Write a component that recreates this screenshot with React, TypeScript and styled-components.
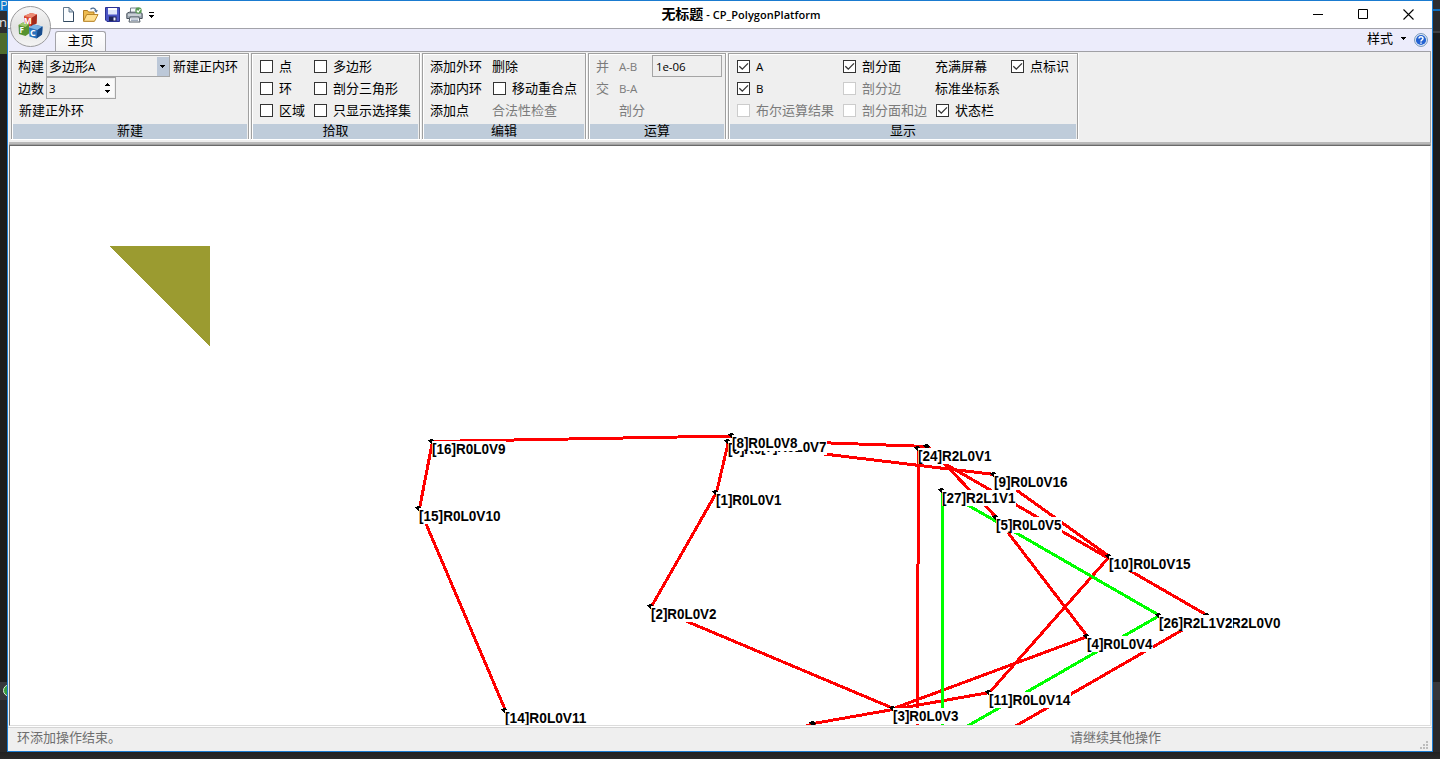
import React from "react";
import styled, { createGlobalStyle, css } from "styled-components";

const GlobalStyle = createGlobalStyle`
  html, body { margin: 0; padding: 0; overflow: hidden; background: #252526; }
  * { box-sizing: border-box; }
  body {
    font-family: "Open Sans", "Noto Sans CJK SC", sans-serif;
    font-size: 13px;
    color: #000;
  }
`;

const Desktop = styled.div`
  display: grid;
  grid-template-columns: 7px 1426px 7px;
  grid-template-rows: 752px 7px;
  width: 1440px;
  height: 759px;
  overflow: hidden;
`;

const EdgeStrip = styled.div`
  display: flex;
  flex-direction: column;
  overflow: hidden;
`;

const EdgeBlock = styled.div<{ $h: number; $bg: string; $align?: string }>`
  flex: none;
  height: ${(p) => p.$h}px;
  background: ${(p) => p.$bg};
  color: #e8e8e8;
  font-size: 13px;
  line-height: ${(p) => p.$h}px;
  display: flex;
  align-items: center;
  justify-content: ${(p) => p.$align ?? "flex-start"};
`;

const Backdrop = styled.div`
  grid-column: 1 / -1;
  background: linear-gradient(#202021, #29292a);
`;

const Window = styled.main`
  position: relative;
  display: flex;
  flex-direction: column;
  border: 1px solid #1a7bd0;
  background: #efefef;
`;

const TitleBar = styled.header`
  display: grid;
  grid-template-columns: 480px 1fr 480px;
  height: 28px;
  flex: none;
  background: #fff;
  border-bottom: 1px solid #a3a3aa;
`;

const QuickAccess = styled.div`
  display: flex;
  align-items: center;
  gap: 6px;
  padding-left: 52px;
`;

const Title = styled.h1`
  margin: 0;
  display: flex;
  justify-content: center;
  align-items: center;
  white-space: pre;
  font-size: 14px;
  font-weight: 700;
  line-height: 20px;
  padding: 0 0 1px 42px;
`;

const TitleLatin = styled.span`
  font-size: 11px;
  font-weight: 600;
  letter-spacing: 0.04px;
  padding-top: 1px;
`;

const WindowButtons = styled.div`
  display: flex;
  justify-content: flex-end;
  align-items: center;
  gap: 34px;
  padding: 0 18px 1px 0;
`;

const OrbButton = styled.button`
  position: absolute;
  left: 2px;
  top: 5px;
  width: 41px;
  height: 41px;
  padding: 0 0 2px;
  border: 1px solid #9a9a9c;
  border-radius: 50%;
  background: linear-gradient(#f6f6f6, #e2e2e2 52%, #f4f4f4);
  display: flex;
  align-items: center;
  justify-content: center;
`;

const TabRow = styled.nav`
  display: flex;
  align-items: flex-end;
  justify-content: space-between;
  height: 22px;
  flex: none;
  padding: 0 4px 0 47px;
  background: #ececfb;
`;

const Tab = styled.div`
  width: 51px;
  height: 20px;
  border: 1px solid #a3a3a8;
  border-bottom: 0;
  border-radius: 3px 3px 0 0;
  background: linear-gradient(#fff, #f3f3f5);
  text-align: center;
  line-height: 17px;
`;

const StyleMenu = styled.div`
  display: flex;
  align-items: center;
  align-self: flex-start;
  height: 18px;
  line-height: 18px;
  gap: 8px;

  svg { margin-bottom: -1px; }
  svg:last-child { margin-bottom: -3px; }
`;

const RibbonFrame = styled.section`
  flex: none;
  height: 93px;
  margin: 0 1px;
  border-top: 1px solid #a0a0a5;
  border-right: 1px solid #a0a0a5;
  border-bottom: 2px solid #b9b9b9;
  padding: 1px 0 0 2px;
  display: flex;
  gap: 1px;
`;

const Group = styled.section<{ $w: number }>`
  width: ${(p) => p.$w}px;
  height: 87px;
  border-right: 1px solid #fff;
  border-bottom: 1px solid #fff;
`;

const GroupInner = styled.div`
  height: 86px;
  border: 1px solid #a0a0a0;
  border-bottom: 0;
  box-shadow: inset 1px 1px 0 #fff;
  display: flex;
  flex-direction: column;
  justify-content: space-between;
  padding: 1px 1px 0 1px;
`;

const GroupBody = styled.div`
  display: flex;
  height: 68px;
  flex: none;
`;

const GroupLabel = styled.div`
  height: 15px;
  background: #bfccda;
  text-align: center;
  line-height: 13px;
`;

const Column = styled.div<{ $w: number; $pad?: number }>`
  flex: none;
  width: ${(p) => p.$w}px;
  padding-left: ${(p) => p.$pad ?? 0}px;
`;

const Row = styled.div<{ $muted?: boolean; $indent?: number }>`
  display: flex;
  align-items: center;
  height: 22px;
  padding-left: ${(p) => p.$indent ?? 0}px;
  white-space: nowrap;
  line-height: 20px;
  color: ${(p) => (p.$muted ? "#7b7b7b" : "#000")};
`;

const Latin = styled.span`
  font-size: 11.5px;
  letter-spacing: -0.1px;
  padding-top: 1px;
`;

const Box = styled.span<{ $muted?: boolean }>`
  flex: none;
  width: 13px;
  height: 13px;
  margin-right: 6px;
  border: 1px solid ${(p) => (p.$muted ? "#cccccc" : "#333")};
  background: #fff;
  display: flex;
`;

const fieldFrame = css`
  display: flex;
  align-items: center;
  justify-content: space-between;
  border: 1px solid #a5a5a5;
  background: #efefef;
  height: 22px;
  padding-left: 2px;
`;

const ComboBox = styled.div`
  ${fieldFrame}
  width: 124px;
  margin: 0 3px 0 2px;
`;

const ComboArrow = styled.span`
  width: 12px;
  height: 19px;
  padding-right: 2px;
  background: #bcc8d8;
  display: flex;
  align-items: center;
  justify-content: center;
`;

const SpinBox = styled.div`
  ${fieldFrame}
  width: 70px;
  margin-left: 2px;
  padding-right: 1px;
`;

const SpinArrows = styled.span`
  width: 14px;
  height: 18px;
  background: #fafafa;
  display: flex;
  align-items: center;
  justify-content: center;
`;

const TextField = styled.div`
  ${fieldFrame}
  width: 70px;
  padding-left: 3px;
`;

const CanvasFrame = styled.section`
  flex: none;
  height: 583px;
  margin: 0 1px;
  border-top: 1px solid #a0a0a0;
  border-bottom: 1px solid #fff;
  background: #fff;
`;

const CanvasWell = styled.div`
  height: 581px;
  border: 1px solid #696969;
  border-right-color: #e0e0e0;
  border-bottom-color: #dcdcdc;

  svg { display: block; }
`;

const StatusBar = styled.footer`
  flex: 1;
  border-top: 1px solid #d4d4d4;
  display: grid;
  grid-template-columns: 1053px 1fr 12px;
  padding-left: 9px;
  color: #6e6e6e;
  line-height: 19px;
`;

const Grip = styled.span`
  display: flex;
  align-items: flex-end;
  padding-bottom: 2px;
`;

function Check({ label, on, muted, latin }: { label: string; on?: boolean; muted?: boolean; latin?: boolean }) {
  return (
    <Row $muted={muted}>
      <Box $muted={muted}>
        {on && (
          <svg width="11" height="11" viewBox="0 0 11 11">
            <path d="M1.3 5.2 4.3 8.2 10 2.4" fill="none" stroke="#333" strokeWidth="1.3" />
          </svg>
        )}
      </Box>
      {latin ? <Latin>{label}</Latin> : label}
    </Row>
  );
}

function RibbonGroup({ label, width, children }: { label: string; width: number; children: React.ReactNode }) {
  return (
    <Group $w={width}>
      <GroupInner>
        <GroupBody>{children}</GroupBody>
        <GroupLabel>{label}</GroupLabel>
      </GroupInner>
    </Group>
  );
}

const DownArrow = () => (
  <svg width="5" height="3" viewBox="0 0 5 3" shapeRendering="crispEdges">
    <path d="M0 0H5V1H4V2H3V3H2V2H1V1H0Z" fill="#000" />
  </svg>
);

const OrbIcon = () => (
  <svg width="27" height="27" viewBox="0 0 27 27">
    <path d="M7 4 14 1l6 1.500-.5 9L13 14.500 7 12.500Z" fill="#d9432f" />
    <path d="M7 4 14 1l6 1.500L14.500 6Z" fill="#ec8a72" />
    <path d="M14.500 6 20 2.500l-.5 9L14 14.500Z" fill="#a32a1c" />
    <path d="M1.500 13 6 10.500l6 1.500v9.500L8.500 24l-6.500-2Z" fill="#56912f" />
    <path d="M1.500 13 6 10.500l6 1.500-3.500 3Z" fill="#9cc76a" />
    <path d="M12 15.500 17 12.500l8.500 2-.5 8L19.500 26.500l-7-2Z" fill="#2a72bd" />
    <path d="M12 15.500 17 12.500l8.500 2-5 3.500Z" fill="#7fb4e6" />
    <path d="M20.500 18 25.500 14.500l-.5 8-5.500 4Z" fill="#174b8c" />
    <g fill="#fff" fontFamily="Open Sans, sans-serif" fontWeight="700">
      <text x="6.800" y="12" fontSize="8.500">M</text>
      <text x="2.600" y="20.500" fontSize="8">F</text>
      <text x="13" y="24" fontSize="9">C</text>
    </g>
  </svg>
);

const NewIcon = () => (
  <svg width="16" height="16" viewBox="0 0 16 16">
    <path d="M3.500.500H9L13.500 5V14.500H3.500Z" fill="#fbfdff" stroke="#63788c" />
    <path d="M13.500 5V14.500H3.500" fill="none" stroke="#31485f" />
    <path d="M9 .5V5h4.500Z" fill="#c6d7e6" stroke="#4c6378" strokeWidth=".8" />
  </svg>
);

const OpenIcon = () => (
  <svg width="17" height="16" viewBox="0 0 17 16">
    <path d="M1.500 14V3.500h4l1 1.500H12v9Z" fill="#eebb4e" stroke="#ad7b22" />
    <path d="M1.500 14.300 4.700 7.500H16L12.500 14.300Z" fill="#ffdf90" stroke="#b98528" />
    <path d="M8.500 2.200C10.500.3 13 .8 14 3.500" fill="none" stroke="#496a91" strokeWidth="1.200" />
    <path d="M12 3.300h4L14.200 5.800Z" fill="#496a91" />
  </svg>
);

const SaveIcon = () => (
  <svg width="15" height="15" viewBox="0 0 15 15">
    <path d="M.5.500H14.500V14.500H2L.5 13Z" fill="#4a55c5" stroke="#2a3192" />
    <path d="M3 1h9v6.500H3Z" fill="#dfe6fa" />
    <path d="M3 1h9v2H3Z" fill="#fff" />
    <path d="M4 9.500h7.500V14H4Z" fill="#1c2358" />
    <path d="M8.500 10.500h2V13.500h-2Z" fill="#eef" />
  </svg>
);

const PrintIcon = () => (
  <svg width="17" height="16" viewBox="0 0 17 16">
    <path d="M4.500 6V1h7v5" fill="#f7f9fc" stroke="#76808b" />
    <path d="M.8 6.500 3 5.200h11l2.200 1.300v5H.8Z" fill="#a4adb7" stroke="#4c555f" />
    <path d="M2 8h13" stroke="#eef1f4" />
    <path d="M4 10h9l1 5H3Z" fill="#f7f9fc" stroke="#505a64" />
    <path d="M5 12h7M5 13.500h7" stroke="#7889a0" strokeWidth=".7" />
    <circle cx="12.500" cy="3.500" r="3.200" fill="#5a9a55" />
    <path d="m10.800 3.500 1.300 1.500L14.400 2" fill="none" stroke="#fff" strokeWidth="1.200" />
  </svg>
);

const HelpIcon = () => (
  <svg width="14" height="14" viewBox="0 0 14 14">
    <circle cx="7" cy="7" r="6.400" fill="#edf4fc" stroke="#6d8fb5" />
    <circle cx="7" cy="7" r="5.100" fill="#2462d2" />
    <path d="M5 5.600c0-2.700 4-2.500 4-.2C9 6.900 7 6.800 7 8.400M7 9.400v1.400" fill="none" stroke="#fff" strokeWidth="1.500" />
  </svg>
);

type Point = [number, number];

const redLines: [Point, Point][] = [
  [[432, 441], [732, 435.5]],
  [[432, 441], [419, 508]],
  [[419, 508], [505, 710]],
  [[728, 441], [716, 492]],
  [[716, 492], [651, 606]],
  [[651, 606], [893, 708]],
  [[893, 708], [1087, 636]],
  [[1087, 636], [996, 517]],
  [[996, 517], [927, 446]],
  [[927, 446], [761, 440]],
  [[728, 442], [994, 474]],
  [[994, 474], [1109, 556]],
  [[1109, 556], [989, 692]],
  [[989, 692], [813, 723]],
  [[813, 723], [780, 735]],
  [[918, 448], [916.6, 782]],
  [[918, 448], [1207, 615]],
  [[1207, 615], [917, 782]],
];

const greenLines: [Point, Point][] = [
  [[942, 490], [942, 740]],
  [[942, 490], [1159, 615]],
  [[1159, 615], [942, 740]],
];

const vertices: { at: Point; label?: string }[] = [
  { at: [927, 446] },
  { at: [813, 723] },
  { at: [1207, 615], label: "[25]R2L0V0" },
  { at: [1159, 615], label: "[26]R2L1V2" },
  { at: [728, 441], label: "[6]R0L0V6" },
  { at: [761, 439], label: "[7]R0L0V7" },
  { at: [732, 435], label: "[8]R0L0V8" },
  { at: [716, 492], label: "[1]R0L0V1" },
  { at: [651, 606], label: "[2]R0L0V2" },
  { at: [893, 708], label: "[3]R0L0V3" },
  { at: [1087, 636], label: "[4]R0L0V4" },
  { at: [996, 517], label: "[5]R0L0V5" },
  { at: [994, 474], label: "[9]R0L0V16" },
  { at: [1109, 556], label: "[10]R0L0V15" },
  { at: [989, 692], label: "[11]R0L0V14" },
  { at: [505, 710], label: "[14]R0L0V11" },
  { at: [419, 508], label: "[15]R0L0V10" },
  { at: [432, 441], label: "[16]R0L0V9" },
  { at: [918, 448], label: "[24]R2L0V1" },
  { at: [942, 490], label: "[27]R2L1V1" },
];

const labelWidth = (label: string) => 66 + 8 * (label.length - 9);

function PolygonCanvas() {
  return (
    <svg width="1420" height="579" viewBox="10 146 1420 579">
      <g shapeRendering="crispEdges">
        <path d="M109.500 246H210V346.500Z" fill="#9b9b30" />
        <g strokeWidth="3" stroke="#ff0000" transform="translate(0.5 0.5)">
          {redLines.map(([a, b], i) => (
            <line key={i} x1={a[0]} y1={a[1]} x2={b[0]} y2={b[1]} />
          ))}
        </g>
        <g strokeWidth="3" stroke="#00ff00" transform="translate(0.5 0.5)">
          {greenLines.map(([a, b], i) => (
            <line key={i} x1={a[0]} y1={a[1]} x2={b[0]} y2={b[1]} />
          ))}
        </g>
        {vertices.map(({ at: [x, y] }, i) => (
          <path key={i} d={`M${x - 1} ${y - 2}h2v1h1v1h1v1h-1v1h-1v1h-2v-1h-1v-1h-1v-1h-1v-1h2v-1h1Z`} fill="#000" />
        ))}
      </g>
      {vertices.map(({ at: [x, y], label }, i) =>
        label ? (
          <g key={i}>
            <rect x={x} y={y} width={labelWidth(label)} height="16" fill="#fff" />
            <text
              x={x}
              y={y + 13}
              fontFamily="Liberation Sans, sans-serif"
              fontWeight="700"
              fontSize="14"
              textLength={labelWidth(label) - 0.5}
              lengthAdjust="spacingAndGlyphs"
            >
              {label}
            </text>
          </g>
        ) : null,
      )}
    </svg>
  );
}

export default function App() {
  return (
    <>
      <GlobalStyle />
      <Desktop>
        <EdgeStrip>
          <EdgeBlock $h={11} $bg="#0e7ad0">P</EdgeBlock>
          <EdgeBlock $h={22} $bg="#2d2d30" $align="flex-end">n</EdgeBlock>
          <EdgeBlock $h={21} $bg="#4d6b2b" />
          <EdgeBlock $h={628} $bg="#1c1c1d" />
          <EdgeBlock $h={18} $bg="#37373b">
            <svg width="7" height="14" viewBox="0 0 7 14">
              <circle cx="9" cy="6.500" r="5.500" fill="#379a3c" stroke="#d8ead8" />
            </svg>
          </EdgeBlock>
          <EdgeBlock $h={52} $bg="#28282a" />
        </EdgeStrip>

        <Window>
          <TitleBar>
            <QuickAccess>
              <NewIcon />
              <OpenIcon />
              <SaveIcon />
              <PrintIcon />
              <svg width="6" height="6" viewBox="0 0 6 6" shapeRendering="crispEdges">
                <path d="M0 0H5V1H0ZM0 3H5V4H4V5H3V6H2V5H1V4H0Z" />
              </svg>
            </QuickAccess>
            <Title>
              无标题<TitleLatin> - CP_PolygonPlatform</TitleLatin>
            </Title>
            <WindowButtons>
              <svg width="11" height="11" viewBox="0 0 11 11">
                <path d="M0 5.500H10" stroke="#000" />
              </svg>
              <svg width="11" height="11" viewBox="0 0 11 11">
                <path d="M.5.500H9.500V9.500H.5Z" fill="none" stroke="#000" />
              </svg>
              <svg width="11" height="11" viewBox="0 0 11 11">
                <path d="M.5.500 10.500 10.500M10.500.500.500 10.500" stroke="#000" strokeWidth="1.100" />
              </svg>
            </WindowButtons>
          </TitleBar>

          <TabRow>
            <Tab>主页</Tab>
            <StyleMenu>
              样式
              <DownArrow />
              <HelpIcon />
            </StyleMenu>
          </TabRow>
          <OrbButton>
            <OrbIcon />
          </OrbButton>

          <RibbonFrame>
            <RibbonGroup label="新建" width={239}>
              <Column $w={230} $pad={5}>
                <Row>
                  构建
                  <ComboBox>
                    <span>多边形<Latin>A</Latin></span>
                    <ComboArrow><DownArrow /></ComboArrow>
                  </ComboBox>
                  新建正内环
                </Row>
                <Row>
                  边数
                  <SpinBox>
                    <Latin>3</Latin>
                    <SpinArrows>
                      <svg width="5" height="10" viewBox="0 0 5 10" shapeRendering="crispEdges">
                        <path d="M2 0h1v1h1v1h1v1H0V2h1V1h1ZM0 7h5v1H4v1H3v1H2V9H1V8H0Z" />
                      </svg>
                    </SpinArrows>
                  </SpinBox>
                </Row>
                <Row $indent={1}>新建正外环</Row>
              </Column>
            </RibbonGroup>

            <RibbonGroup label="拾取" width={170}>
              <Column $w={61} $pad={7}>
                <Check label="点" />
                <Check label="环" />
                <Check label="区域" />
              </Column>
              <Column $w={100}>
                <Check label="多边形" />
                <Check label="剖分三角形" />
                <Check label="只显示选择集" />
              </Column>
            </RibbonGroup>

            <RibbonGroup label="编辑" width={165}>
              <Column $w={68} $pad={6}>
                <Row>添加外环</Row>
                <Row>添加内环</Row>
                <Row>添加点</Row>
              </Column>
              <Column $w={92}>
                <Row>删除</Row>
                <Row $indent={1}><Check label="移动重合点" /></Row>
                <Row $muted>合法性检查</Row>
              </Column>
            </RibbonGroup>

            <RibbonGroup label="运算" width={139}>
              <Column $w={29} $pad={6}>
                <Row $muted>并</Row>
                <Row $muted>交</Row>
              </Column>
              <Column $w={33}>
                <Row $muted><Latin>A-B</Latin></Row>
                <Row $muted><Latin>B-A</Latin></Row>
                <Row $muted>剖分</Row>
              </Column>
              <Column $w={70}>
                <Row><TextField><Latin>1e-06</Latin></TextField></Row>
              </Column>
            </RibbonGroup>

            <RibbonGroup label="显示" width={351}>
              <Column $w={113} $pad={7}>
                <Check label="A" on latin />
                <Check label="B" on latin />
                <Check label="布尔运算结果" muted />
              </Column>
              <Column $w={92}>
                <Check label="剖分面" on />
                <Check label="剖分边" muted />
                <Check label="剖分面和边" muted />
              </Column>
              <Column $w={76}>
                <Row>充满屏幕</Row>
                <Row>标准坐标系</Row>
                <Row $indent={1}><Check label="状态栏" on /></Row>
              </Column>
              <Column $w={62}>
                <Check label="点标识" on />
              </Column>
            </RibbonGroup>
          </RibbonFrame>

          <CanvasFrame>
            <CanvasWell>
              <PolygonCanvas />
            </CanvasWell>
          </CanvasFrame>

          <StatusBar>
            <span>环添加操作结束。</span>
            <span>请继续其他操作</span>
            <Grip>
              <svg width="8" height="8" viewBox="0 0 8 8" shapeRendering="crispEdges">
                <path d="M6 0h2v2H6ZM3 3h2v2H3ZM6 3h2v2H6ZM0 6h2v2H0ZM3 6h2v2H3ZM6 6h2v2H6Z" fill="#bdbdbd" />
              </svg>
            </Grip>
          </StatusBar>
        </Window>

        <EdgeStrip>
          <EdgeBlock $h={9} $bg="#2d2d30" />
          <EdgeBlock $h={2} $bg="#0e6fbf" />
          <EdgeBlock $h={20} $bg="#29292b" />
          <EdgeBlock $h={2} $bg="#3f3f43" />
          <EdgeBlock $h={649} $bg="#1b1b1c" />
          <EdgeBlock $h={18} $bg="#37373b" />
          <EdgeBlock $h={52} $bg="#28282a" />
        </EdgeStrip>
        <Backdrop />
      </Desktop>
    </>
  );
}
